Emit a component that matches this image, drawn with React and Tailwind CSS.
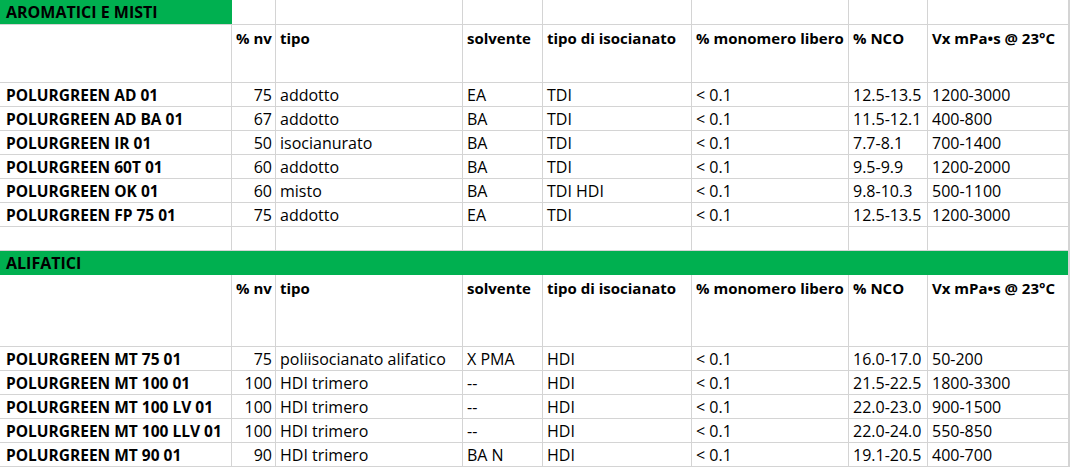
const HEAD = ['', '% nv', 'tipo', 'solvente', 'tipo di isocianato', '% monomero libero', '% NCO', 'Vx mPa•s @ 23°C'];

const AROMATICI = [
    ['POLURGREEN AD 01', '75', 'addotto', 'EA', 'TDI', '< 0.1', '12.5-13.5', '1200-3000'],
    ['POLURGREEN AD BA 01', '67', 'addotto', 'BA', 'TDI', '< 0.1', '11.5-12.1', '400-800'],
    ['POLURGREEN IR 01', '50', 'isocianurato', 'BA', 'TDI', '< 0.1', '7.7-8.1', '700-1400'],
    ['POLURGREEN 60T 01', '60', 'addotto', 'BA', 'TDI', '< 0.1', '9.5-9.9', '1200-2000'],
    ['POLURGREEN OK 01', '60', 'misto', 'BA', 'TDI HDI', '< 0.1', '9.8-10.3', '500-1100'],
    ['POLURGREEN FP 75 01', '75', 'addotto', 'EA', 'TDI', '< 0.1', '12.5-13.5', '1200-3000'],
];

const ALIFATICI = [
    ['POLURGREEN MT 75 01', '75', 'poliisocianato alifatico', 'X PMA', 'HDI', '< 0.1', '16.0-17.0', '50-200'],
    ['POLURGREEN MT 100 01', '100', 'HDI trimero', '--', 'HDI', '< 0.1', '21.5-22.5', '1800-3300'],
    ['POLURGREEN MT 100 LV 01', '100', 'HDI trimero', '--', 'HDI', '< 0.1', '22.0-23.0', '900-1500'],
    ['POLURGREEN MT 100 LLV 01', '100', 'HDI trimero', '--', 'HDI', '< 0.1', '22.0-24.0', '550-850'],
    ['POLURGREEN MT 90 01', '90', 'HDI trimero', 'BA N', 'HDI', '< 0.1', '19.1-20.5', '400-700'],
];

const line = 'border-r border-b border-[#d4d4d4] whitespace-nowrap';

// una riga di dati, testo in basso come in Excel
const DataRow = ({ row }) => (
    <>
        {row.map((v, i) => (
            <div
                key={i}
                className={`${line} h-[24px] flex items-end pb-[1px] leading-[20px] ${i === 0 ? 'pl-[6px] font-bold text-[15.5px]' : 'pl-[4px]'} ${i === 1 ? 'justify-end pr-[3px]' : ''}`}
            >
                {v}
            </div>
        ))}
        <div className={`${line} h-[24px]`}></div>
    </>
);

const HeadRow = ({ tall }) => (
    <>
        {HEAD.map((v, i) => (
            <div key={i} className={`${line} ${tall ? 'h-[72px]' : 'h-[58px]'} pt-[3px] pl-[4px] leading-[20px] font-bold text-[15px]`}>
                {v}
            </div>
        ))}
        <div className={`${line} ${tall ? 'h-[72px]' : 'h-[58px]'}`}></div>
    </>
);

const Empty = () => (
    <>
        {Array.from({ length: 9 }).map((_, i) => (
            <div key={i} className={`${line} h-[24px]`}></div>
        ))}
    </>
);

export default function App() {
    return (
        <div className="w-[1070px] h-[468px] overflow-hidden bg-white text-black text-[16px]" style={{ fontFamily: '"Open Sans", sans-serif' }}>
            <div className="grid grid-cols-[232px_44px_187px_80px_149px_157px_79px_141px_1fr]">
                {/* AROMATICI E MISTI */}
                <div className="h-[25px] bg-[#00b050] border-b border-[#d4d4d4] pl-[6px] pt-[2px] leading-[20px] font-bold">AROMATICI E MISTI</div>
                {Array.from({ length: 8 }).map((_, i) => (
                    <div key={i} className={`${line} h-[25px]`}></div>
                ))}
                <HeadRow />
                {AROMATICI.map((r, i) => <DataRow key={i} row={r} />)}
                <Empty />

                {/* ALIFATICI */}
                <div className="col-span-8 h-[24px] bg-[#00b050] border-r border-[#d4d4d4] pl-[6px] pt-[2px] leading-[20px] font-bold">ALIFATICI</div>
                <div className={`${line} h-[24px]`}></div>
                <HeadRow tall />
                {ALIFATICI.map((r, i) => <DataRow key={i} row={r} />)}
            </div>
        </div>
    );
}
